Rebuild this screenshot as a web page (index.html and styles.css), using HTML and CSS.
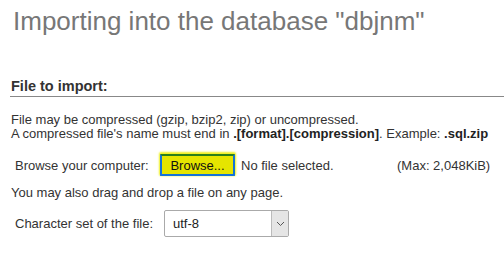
FILE: index.html
```html
<!DOCTYPE html>
<html>
<head>
<meta charset="utf-8">
<link rel="stylesheet" href="styles.css">
</head>
<body>
<h2 class="title">Importing into the database "dbjnm"</h2>
<section class="panel">
  <h3 class="legend">File to import:</h3>
  <p class="info">File may be compressed (gzip, bzip2, zip) or uncompressed.<br>A compressed file's name must end in <b>.[format].[compression]</b>. Example: <b>.sql.zip</b></p>
  <div class="row browse-row">
    <span class="label">Browse your computer:</span>
    <span class="file">
      <span class="btn">Browse...</span>
      <span class="nofile">No file selected.</span>
    </span>
    <span class="max">(Max: 2,048KiB)</span>
  </div>
  <p class="drag">You may also drag and drop a file on any page.</p>
  <div class="row charset-row">
    <span class="label">Character set of the file:</span>
    <span class="select">
      <span class="select-text">utf-8</span>
      <span class="select-arrow"><svg width="9" height="6" viewBox="0 0 9 6"><path d="M1 1 L4.5 4.5 L8 1" fill="none" stroke="#555" stroke-width="1"/></svg></span>
    </span>
  </div>
</section>
</body>
</html>
```
FILE: styles.css
```css
html, body {
  margin: 0;
  padding: 0;
  background: #fff;
}
body {
  font-family: "Liberation Sans", Arial, sans-serif;
  font-size: 13px;
  color: #333;
  width: 504px;
  height: 257px;
  overflow: hidden;
}
.title {
  margin: 0;
  padding: 6px 0 0 13px;
  font-size: 26px;
  font-weight: normal;
  color: #777;
  line-height: 31px;
  white-space: nowrap;
}
.panel {
  margin-top: 42px;
  padding-left: 10px;
}
.legend {
  margin: 0;
  padding: 0 0 2px 1px;
  font-size: 14.5px;
  font-weight: bold;
  line-height: 15px;
  color: #333;
  border-bottom: 1px solid #888;
}
.info {
  margin: 16px 0 0 1px;
  line-height: 14px;
}
.info b {
  color: #222;
}
.row {
  display: flex;
  align-items: center;
  padding-left: 5px;
}
.browse-row {
  margin-top: 13px;
  height: 22px;
}
.label {
  width: 145px;
  flex: none;
}
.file {
  display: flex;
  align-items: center;
  width: 237px;
  flex: none;
}
.btn {
  box-sizing: border-box;
  width: 75px;
  height: 22px;
  display: flex;
  align-items: center;
  justify-content: center;
  background: #e5e500;
  color: #111;
  border: 2px solid #1473d8;
  border-top-color: #2a7f1a;
  box-shadow: 0 -1px 2px 1px #f0f020;
  border-radius: 1px;
}
.nofile {
  margin-left: 6px;
}
.max {
  color: #333;
}
.drag {
  margin: 9px 0 0 1px;
  line-height: 15px;
}
.charset-row {
  margin-top: 10px;
}
.select {
  box-sizing: border-box;
  margin-left: 4px;
  width: 125px;
  height: 27px;
  border: 1px solid #aaa;
  border-radius: 2px;
  display: flex;
  align-items: stretch;
  background: #fff;
}
.select-text {
  flex: 1;
  display: flex;
  align-items: center;
  padding-left: 8px;
  color: #222;
}
.select-arrow {
  width: 16px;
  background: #e5e5e5;
  border-left: 1px solid #bbb;
  display: flex;
  align-items: center;
  justify-content: center;
}
```
